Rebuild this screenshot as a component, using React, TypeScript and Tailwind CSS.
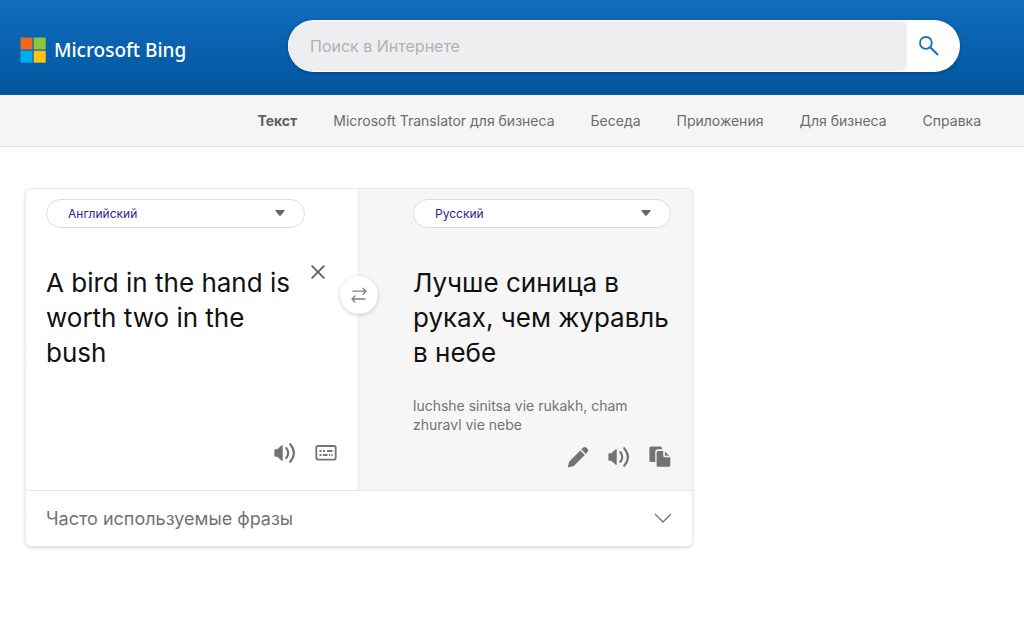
import { useState } from 'react';

const NAV_ITEMS = ['Текст', 'Microsoft Translator для бизнеса', 'Беседа', 'Приложения', 'Для бизнеса', 'Справка'];

function SpeakerIcon() {
  return (
    <svg viewBox="0 0 22 22" className="w-[22px] h-[22px]" fill="none" aria-hidden="true">
      <path d="M1.200 7.200Q.4 7.200.4 8v6Q.4 14.800 1.200 14.800H3.200l4.600 4q.9.700.9-.4V3.600q0-1.100-.9-.4L3.200 7.200z" fill="#737373" />
      <path d="M12.300 6q3.800 5 0 10" stroke="#737373" strokeWidth="2.100" strokeLinecap="round" />
      <path d="M16.200 2.200q7.400 8.800 0 17.600" stroke="#737373" strokeWidth="2.100" strokeLinecap="round" />
    </svg>
  );
}

function KeyboardIcon() {
  return (
    <svg viewBox="0 0 22 22" className="w-[22px] h-[22px]" fill="none" stroke="#737373" aria-hidden="true">
      <rect x="1.300" y="4" width="19.400" height="13.600" rx="1.600" strokeWidth="1.800" />
      <path d="M4.500 9h2M8 9h2M12 9h5.500M4.500 13h2M8 13h4.500M14 13h1.200M16.400 13h1.200" strokeWidth="1.800" />
    </svg>
  );
}

function PencilIcon() {
  return (
    <svg viewBox="0 0 22 22" className="w-[22px] h-[22px]" fill="#737373" aria-hidden="true">
      <path d="M13.300 4.400 17.800 8.900 7 19.700q-.4.400-1 .5L1.600 21.200Q.7 21.400.9 20.500L2 16.200q.1-.5.5-.9z" />
      <path d="M14.300 3.400 15.900 1.800q1.900-1.900 4 .2 2.200 2.200.4 4.200L18.800 7.900z" />
    </svg>
  );
}

function CopyIcon() {
  return (
    <svg viewBox="0 0 22 22" className="w-[22px] h-[22px]" fill="#737373" aria-hidden="true">
      <path d="M2 .5H11.200q1.600 0 1.800 1.800v1H8.800Q6.300 3.300 6.300 5.800V16H2Q.4 16 .4 14.400V2.100Q.4.500 2 .5z" />
      <path d="M9.200 5h5v4.600q0 1.600 1.600 1.600h5.500v8q0 1.600-1.600 1.600H9.200q-1.600 0-1.600-1.600V6.600Q7.600 5 9.200 5z" />
      <path d="M15.900 5.600 20.200 9.700H15.900z" />
    </svg>
  );
}

function LanguageSelect({ label, value }: { label: string; value: string }) {
  return (
    <div className="relative w-[259px] max-w-full">
      <select
        aria-label={label}
        defaultValue={value}
        className="block w-full h-[29px] appearance-none rounded-full border border-[#dcdcdc] bg-white pl-[21px] pr-10 text-[12px] text-[#2b1c95] outline-none"
      >
        <option>Английский</option>
        <option>Русский</option>
      </select>
      <svg viewBox="0 0 10 6" className="absolute right-5 top-[11px] w-[10px] h-[6px] pointer-events-none" fill="#666" aria-hidden="true">
        <path d="M1 0h8q1.200 0 .5 1L6 5.300q-1 1-2 0L.5 1Q-.2 0 1 0z" />
      </svg>
    </div>
  );
}

export default function App() {
  const [text, setText] = useState('A bird in the hand is worth two in the bush');
  const [open, setOpen] = useState(false);

  return (
    <div className="min-h-screen bg-white font-['Inter','Liberation_Sans',sans-serif] text-[#737373]">
      {/* Header */}
      <header className="flex h-[95px] items-start bg-linear-to-b from-[#106dbf] to-[#02569d] pt-5 pr-16">
        <a href="#" className="flex w-72 shrink-0 items-center gap-2 pl-5 pt-3">
          <svg viewBox="0 0 26 26" className="w-[26px] h-[26px]" aria-hidden="true">
            <rect x=".5" y=".5" width="12" height="12" fill="#f26522" />
            <rect x="13.700" y=".5" width="12" height="12" fill="#8dc63f" />
            <rect x=".5" y="13.700" width="12" height="12" fill="#00aeef" />
            <rect x="13.700" y="13.700" width="12" height="12" fill="#ffc20e" />
          </svg>
          <span className="font-['Noto_Sans',sans-serif] text-[19px] leading-9 font-medium text-white">Microsoft Bing</span>
        </a>
        <form className="flex h-[52px] flex-1 overflow-hidden rounded-full bg-white shadow-[0_1px_4px_rgba(0,0,0,0.25)]" onSubmit={(e) => e.preventDefault()}>
          <input
            type="text"
            aria-label="Поиск в Интернете"
            placeholder="Поиск в Интернете"
            className="my-px min-w-0 flex-1 rounded-r-md bg-[#eeeef0] pl-[22px] text-[16px] text-[#444] placeholder-[#b1b1b3] outline-none"
          />
          <button type="submit" aria-label="Найти" className="w-[53px] shrink-0 pl-3">
            <svg viewBox="0 0 20 20" className="w-5 h-5" fill="none" stroke="#176fb8" aria-hidden="true">
              <circle cx="6.900" cy="6.900" r="5.900" strokeWidth="1.800" />
              <path d="M11.200 11.200 19 19" strokeWidth="2.100" />
            </svg>
          </button>
        </form>
      </header>

      {/* Sections */}
      <nav className="flex h-[52px] items-center justify-end gap-9 border-b border-[#e3e3e3] bg-[#f5f5f5] pr-[43px] text-[14px] whitespace-nowrap text-[#6c6c6c]">
        {NAV_ITEMS.map((item, i) => (
          <a key={item} href="#" className={i === 0 ? 'font-bold text-[#606060]' : ''}>
            {item}
          </a>
        ))}
      </nav>

      {/* Translator card */}
      <main className="px-[25px] pt-[41px]">
        <div className="max-w-[668px] rounded-md border border-[#ebebeb] bg-white shadow-[0_1px_3px_rgba(0,0,0,0.16)]">
          <div className="relative grid grid-cols-2">
            <section className="flex flex-col border-r border-[#ebebeb] pt-[10px] pl-5 pr-[21px]">
              <LanguageSelect label="Исходный язык" value="Английский" />
              <div className="mt-[37px] flex items-start justify-between">
                <textarea
                  aria-label="Исходный текст"
                  value={text}
                  onChange={(e) => setText(e.target.value)}
                  rows={3}
                  className="block w-[256px] resize-none overflow-hidden bg-transparent text-[26px] leading-[35px] text-[#111] outline-none"
                />
                <button type="button" aria-label="Очистить" onClick={() => setText('')} className="mr-3 shrink-0">
                  <svg viewBox="0 0 14 14" className="w-[14px] h-[14px]" fill="none" stroke="#606060" strokeWidth="1.800" strokeLinecap="round" aria-hidden="true">
                    <path d="M1.200 1.200 12.800 12.800M12.800 1.200 1.200 12.800" />
                  </svg>
                </button>
              </div>
              <div className="mt-auto mb-[26px] flex justify-end gap-[19px]">
                <button type="button" aria-label="Прослушать"><SpeakerIcon /></button>
                <button type="button" aria-label="Клавиатура"><KeyboardIcon /></button>
              </div>
            </section>

            <section className="flex flex-col rounded-tr-md bg-[#f6f6f6] pt-[10px] pl-[54px] pr-[21px]">
              <LanguageSelect label="Язык перевода" value="Русский" />
              <p className="mt-[37px] text-[26px] leading-[35px] text-[#111]">Лучше синица в руках, чем журавль в небе</p>
              <p className="mt-[26px] text-[14px] leading-[19px]">luchshe sinitsa vie rukakh, cham zhuravl vie nebe</p>
              <div className="mt-3 mb-[22px] flex justify-end gap-[19px]">
                <button type="button" aria-label="Изменить"><PencilIcon /></button>
                <button type="button" aria-label="Прослушать перевод"><SpeakerIcon /></button>
                <button type="button" aria-label="Копировать"><CopyIcon /></button>
              </div>
            </section>

            <button
              type="button"
              aria-label="Поменять языки"
              className="absolute top-[87px] left-1/2 flex h-[38px] w-[38px] -translate-x-1/2 items-center justify-center rounded-full bg-white shadow-[0_1px_4px_rgba(0,0,0,0.2)]"
            >
              <svg viewBox="0 0 16 16" className="w-4 h-4" fill="none" stroke="#808080" strokeWidth="1.300" strokeLinecap="round" strokeLinejoin="round" aria-hidden="true">
                <path d="M2 4.200h13M12 1.200l3 3-3 3M14 12H1M4 9l-3 3 3 3" />
              </svg>
            </button>
          </div>

          <button
            type="button"
            aria-expanded={open}
            onClick={() => setOpen(!open)}
            className="flex h-14 w-full items-center justify-between rounded-b-md border-t border-[#e6e6e6] bg-white pl-5 pr-5 text-[18px]"
          >
            Часто используемые фразы
            <svg viewBox="0 0 18 12" className="w-[18px] h-3" fill="none" stroke="#737373" strokeWidth="1.300" aria-hidden="true">
              <path d="M1 1l8 8 8-8" />
            </svg>
          </button>
        </div>
      </main>
    </div>
  );
}
